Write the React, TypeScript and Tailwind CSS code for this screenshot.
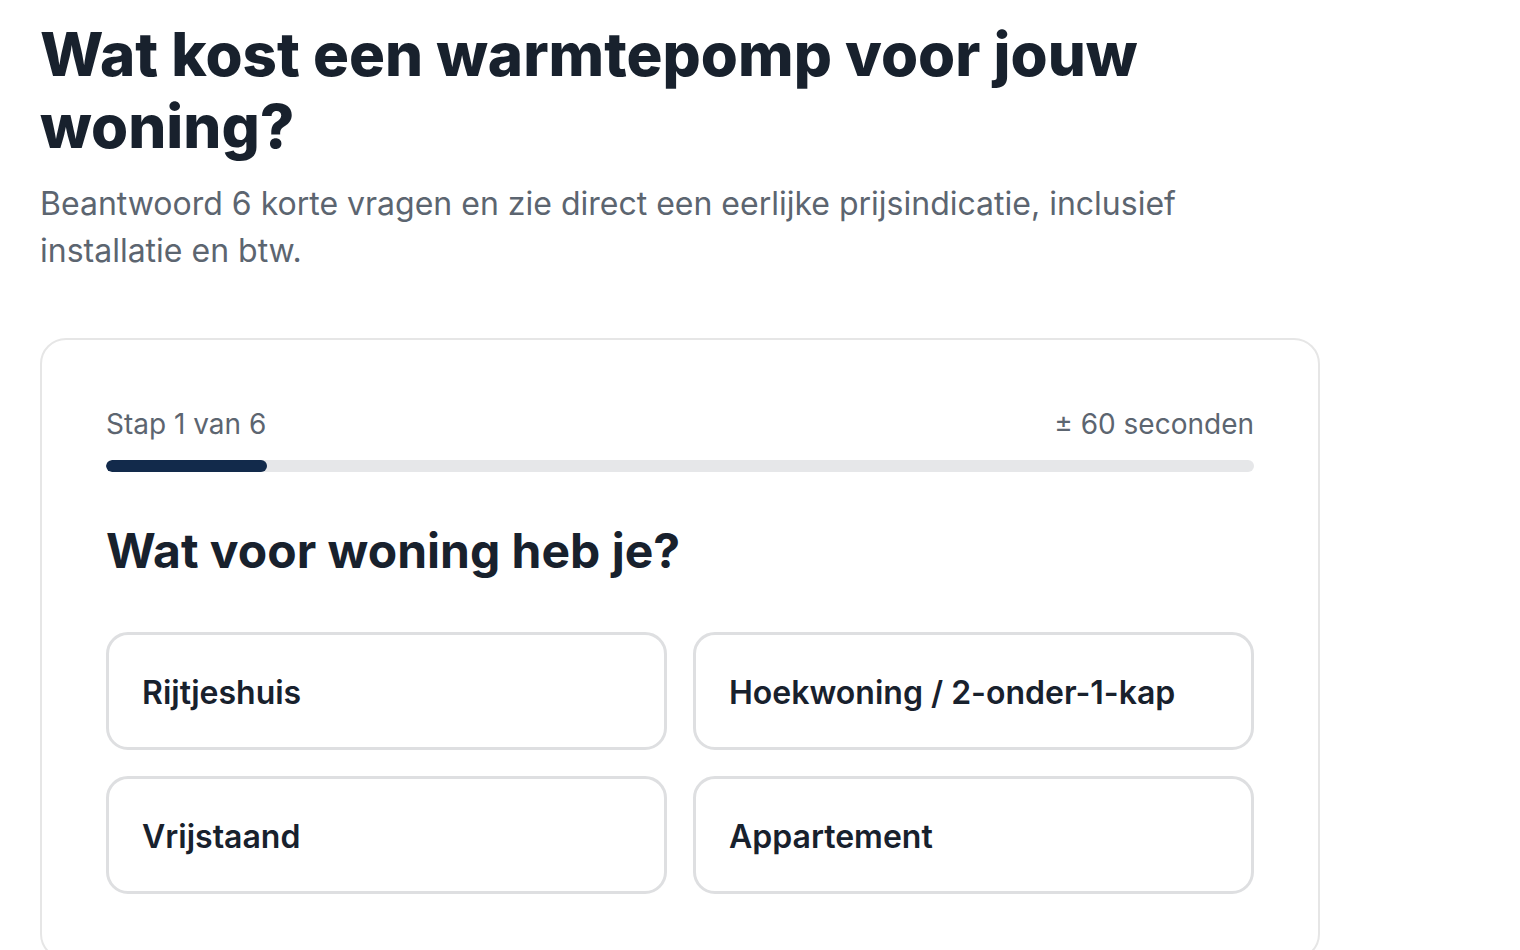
import React from "react";

export default function App() {
  const options = ["Rijtjeshuis", "Hoekwoning / 2-onder-1-kap", "Vrijstaand", "Appartement"];
  return (
    <div className="min-h-screen bg-white px-[40px] pt-[18px] font-['Inter',sans-serif]">
      <div className="w-[1280px]">
        <h1 className="text-[60px] leading-[72px] font-extrabold text-[#18212d]">
          Wat kost een warmtepomp voor jouw woning?
        </h1>
        <p className="mt-[18px] text-[32px] leading-[47px] text-[#5c6570]">
          Beantwoord 6 korte vragen en zie direct een eerlijke prijsindicatie, inclusief installatie en btw.
        </p>
        <div className="mt-[64px] rounded-[26px] border-2 border-[#e6e6e6] px-[64px] pt-[66px] pb-[64px]">
          <div className="flex items-center justify-between text-[28px] leading-[36px] text-[#5c6570]">
            <span>Stap 1 van 6</span>
            <span>± 60 seconden</span>
          </div>
          <div className="mt-[18px] h-[12px] w-full overflow-hidden rounded-full bg-[#e6e7e9]">
            <div className="h-full rounded-full bg-[#122a4b]" style={{ width: "14%" }} />
          </div>
          <h2 className="mt-[49px] text-[48px] leading-[60px] font-bold text-[#18212d]">
            Wat voor woning heb je?
          </h2>
          <div className="mt-[51px] grid grid-cols-2 gap-[26px]">
            {options.map((o) => (
              <button
                key={o}
                className="flex h-[118px] items-center rounded-[22px] border-[3px] border-[#dedfe1] bg-white px-[33px] pt-[3px] text-left text-[32px] font-semibold text-[#18212d]"
              >
                {o}
              </button>
            ))}
          </div>
        </div>
      </div>
    </div>
  );
}
